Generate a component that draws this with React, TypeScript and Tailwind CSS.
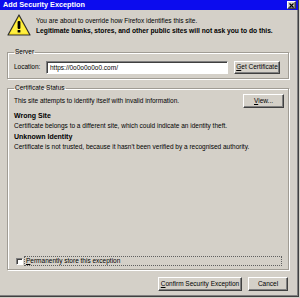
const raised =
  'bg-[#d4d0c8] border border-t-white border-l-white border-r-[#404040] border-b-[#404040] shadow-[inset_-1px_-1px_0_#808080]';

function Button({ label, u, className }: { label: string; u?: string; className: string }) {
  const i = u ? label.indexOf(u) : -1;
  return (
    <button className={`${raised} ${className} flex items-center justify-center text-[6.5px] leading-none text-black`}>
      {i >= 0 ? (
        <span>
          {label.slice(0, i)}
          <span className="underline">{label[i]}</span>
          {label.slice(i + 1)}
        </span>
      ) : (
        label
      )}
    </button>
  );
}

function WarningIcon() {
  return (
    <svg width="24" height="22" viewBox="0 0 24 22">
      <path d="M12 1 L23 21 L1 21 Z" fill="#f8e020" stroke="#303030" strokeWidth="1.2" strokeLinejoin="round" />
      <path d="M12 3.5 L21 19.5 L3 19.5 Z" fill="#ffef40" />
      <rect x="10.6" y="7" width="2.8" height="8" rx="1" fill="#000" />
      <rect x="10.6" y="16" width="2.8" height="2.6" rx="0.6" fill="#000" />
    </svg>
  );
}

export default function App() {
  return (
    <div className="w-[300px] h-[298px] bg-[#d4d0c8] overflow-hidden" style={{ fontFamily: '"Liberation Sans", Arial, sans-serif' }}>
      <div className="w-[299px] h-[297px] border-r border-b border-r-[#404040] border-b-[#404040] shadow-[inset_-1px_-1px_0_#808080] flex flex-col">
        <div className="h-[10px] bg-[#0c0cee] flex items-center justify-between pl-[3px] pr-[2px]">
          <span className="text-white font-bold text-[7.3px] leading-none">Add Security Exception</span>
          <div className={`${raised} w-[9px] h-[8px] flex items-center justify-center`}>
            <svg width="5" height="5" viewBox="0 0 5 5">
              <path d="M0.5 0.5 L4.5 4.5 M4.5 0.5 L0.5 4.5" stroke="#000" strokeWidth="1.1" />
            </svg>
          </div>
        </div>

        <div className="flex">
          <div className="ml-[7px] mt-[4px]">
            <WarningIcon />
          </div>
          <div className="ml-[5px] mt-[6px] text-[6.5px] leading-[10px] text-black">
            <div>You are about to override how Firefox identifies this site.</div>
            <div className="font-bold text-[6.7px] whitespace-nowrap">Legitimate banks, stores, and other public sites will not ask you to do this.</div>
          </div>
        </div>

        <fieldset className="ml-[7px] mt-[11px] w-[282px] border border-[#a09c94] shadow-[1px_1px_0_#fff,inset_1px_1px_0_#fff] px-[6px] pb-[4px]">
          <legend className="px-[1px] text-[6.5px] leading-[10px] text-black">Server</legend>
          <div className="flex items-center mt-[4px]">
            <span className="text-[6.5px] leading-none text-black w-[32px]">Location:</span>
            <div className="w-[182px] h-[13px] bg-white border border-t-[#808080] border-l-[#808080] border-r-white border-b-white shadow-[inset_1px_1px_0_#404040] flex items-center pl-[3px] text-[6.5px] text-black">
              https://0o0o0o0o0.com/
            </div>
            <Button label="Get Certificate" u="G" className="ml-[6px] w-[46px] h-[13px]" />
          </div>
        </fieldset>

        <fieldset className="ml-[7px] mt-[4px] w-[282px] border border-[#a09c94] shadow-[1px_1px_0_#fff,inset_1px_1px_0_#fff] px-[6px]">
          <legend className="px-[1px] text-[6.5px] leading-[10px] text-black">Certificate Status</legend>
          <div className="h-[176px] flex flex-col text-[6.5px] leading-[10px] text-black">
            <div className="flex items-center justify-between mt-[1px]">
              <span>This site attempts to identify itself with invalid information.</span>
              <Button label="View..." u="V" className="w-[41px] h-[14px] mr-[-2px]" />
            </div>
            <div className="font-bold text-[7px] mt-[3px]">Wrong Site</div>
            <div>Certificate belongs to a different site, which could indicate an identity theft.</div>
            <div className="font-bold text-[7px] mt-[1px]">Unknown Identity</div>
            <div>Certificate is not trusted, because it hasn't been verified by a recognised authority.</div>
            <div className="flex-1" />
            <div className="flex items-center mb-[3px] ml-[2px]">
              <div className="w-[7px] h-[7px] bg-white border border-t-[#808080] border-l-[#808080] border-r-white border-b-white shadow-[inset_1px_1px_0_#404040]" />
              <div className="ml-[1px] w-[258px] h-[10px] border border-dotted border-[#606060] flex items-center pl-[1px] leading-none">
                <span>
                  <span className="underline">P</span>ermanently store this exception
                </span>
              </div>
            </div>
          </div>
        </fieldset>

        <div className="flex justify-end mt-[7px] pr-[10px] gap-[6px]">
          <Button label="Confirm Security Exception" u="C" className="w-[84px] h-[14px]" />
          <Button label="Cancel" className="w-[40px] h-[14px]" />
        </div>
      </div>
    </div>
  );
}
